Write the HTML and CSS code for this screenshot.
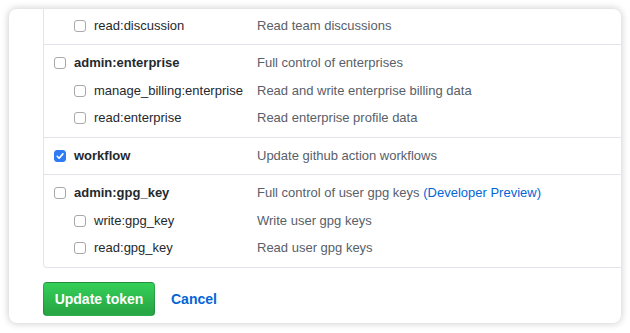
FILE: index.html
```html
<!DOCTYPE html>
<html>
	<head>
		<link rel="stylesheet" href="styles.css">
		<title>Edit token scopes</title>
	</head>
	<body>
		<div class="card">
			<div class="scopes">
				<!-- repo discussions (tail of the list above) -->
				<div class="group first">
					<div class="row sub">
						<div class="name"><span class="box"></span>read:discussion</div>
						<div class="desc">Read team discussions</div>
					</div>
				</div>

				<div class="group">
					<div class="row">
						<div class="name top"><span class="box"></span>admin:enterprise</div>
						<div class="desc">Full control of enterprises</div>
					</div>
					<div class="subs">
						<div class="row sub">
							<div class="name"><span class="box"></span>manage_billing:enterprise</div>
							<div class="desc">Read and write enterprise billing data</div>
						</div>
						<div class="row sub">
							<div class="name"><span class="box"></span>read:enterprise</div>
							<div class="desc">Read enterprise profile data</div>
						</div>
					</div>
				</div>

				<div class="group">
					<div class="row">
						<div class="name top">
							<span class="box checked">
								<svg width="12" height="12" viewBox="0 0 12 12"><path d="M3.2 6.3 L5.1 8.2 L8.9 3.9" fill="none" stroke="#fff" stroke-width="1.6" stroke-linecap="round" stroke-linejoin="round"/></svg>
							</span>workflow
						</div>
						<div class="desc">Update github action workflows</div>
					</div>
				</div>

				<div class="group">
					<div class="row">
						<div class="name top"><span class="box"></span>admin:gpg_key</div>
						<div class="desc">Full control of user gpg keys <a class="link" href="#">(Developer Preview)</a></div>
					</div>
					<div class="subs">
						<div class="row sub">
							<div class="name"><span class="box"></span>write:gpg_key</div>
							<div class="desc">Write user gpg keys</div>
						</div>
						<div class="row sub">
							<div class="name"><span class="box"></span>read:gpg_key</div>
							<div class="desc">Read user gpg keys</div>
						</div>
					</div>
				</div>
			</div>

			<div class="actions">
				<button class="btn-primary">Update token</button>
				<a class="cancel" href="#">Cancel</a>
			</div>
		</div>
	</body>
</html>
```

FILE: styles.css
```css
body {
	margin: 0;
	background: #fff;
	font-family: "Liberation Sans", Arial, sans-serif;
	font-size: 13px;
	color: #24292e;
}
.card {
	margin: 9px;
	width: 612px;
	height: 314px;
	border-radius: 8px;
	background: #fff;
	box-shadow: 0 0 7px 1px rgba(0, 0, 0, 0.18);
	overflow: hidden;
	padding-left: 34px;
	box-sizing: border-box;
}
.scopes {
	width: 600px;
	border-left: 1px solid #e1e4e8;
	border-bottom: 1px solid #e1e4e8;
	border-bottom-left-radius: 4px;
}
.group {
	border-top: 1px solid #e1e4e8;
	padding: 4px 0 5px 10px;
}
.group.first {
	border-top: none;
	padding-top: 3px;
}
.subs {
	margin: 1px 0;
}
.row {
	display: flex;
	align-items: center;
	height: 27px;
}
.name {
	display: flex;
	align-items: center;
	width: 203px;
	flex: none;
	white-space: nowrap;
}
.name.top {
	font-weight: bold;
}
.sub .name {
	padding-left: 20px;
	width: 183px;
}
.box {
	display: inline-block;
	width: 12px;
	height: 12px;
	border: 1px solid #a8a8a8;
	border-radius: 3px;
	box-sizing: border-box;
	margin-right: 8px;
	background: #fff;
	flex: none;
}
.box.checked {
	background: #2f7bf5;
	border-color: #2f7bf5;
	position: relative;
}
.box.checked svg {
	position: absolute;
	left: -1px;
	top: -1px;
}
.desc {
	color: #586069;
	white-space: nowrap;
}
.link {
	color: #0366d6;
	text-decoration: none;
}
.actions {
	display: flex;
	align-items: center;
	margin-top: 14px;
}
.btn-primary {
	width: 112px;
	height: 34px;
	font-family: "Liberation Sans", Arial, sans-serif;
	font-size: 14px;
	font-weight: bold;
	color: #fff;
	background: linear-gradient(#34d058, #28a745 90%);
	border: 1px solid rgba(27, 31, 35, 0.2);
	border-radius: 4px;
	padding: 0;
}
.cancel {
	margin-left: 16px;
	font-size: 14px;
	font-weight: bold;
	color: #0366d6;
	text-decoration: none;
}
```
